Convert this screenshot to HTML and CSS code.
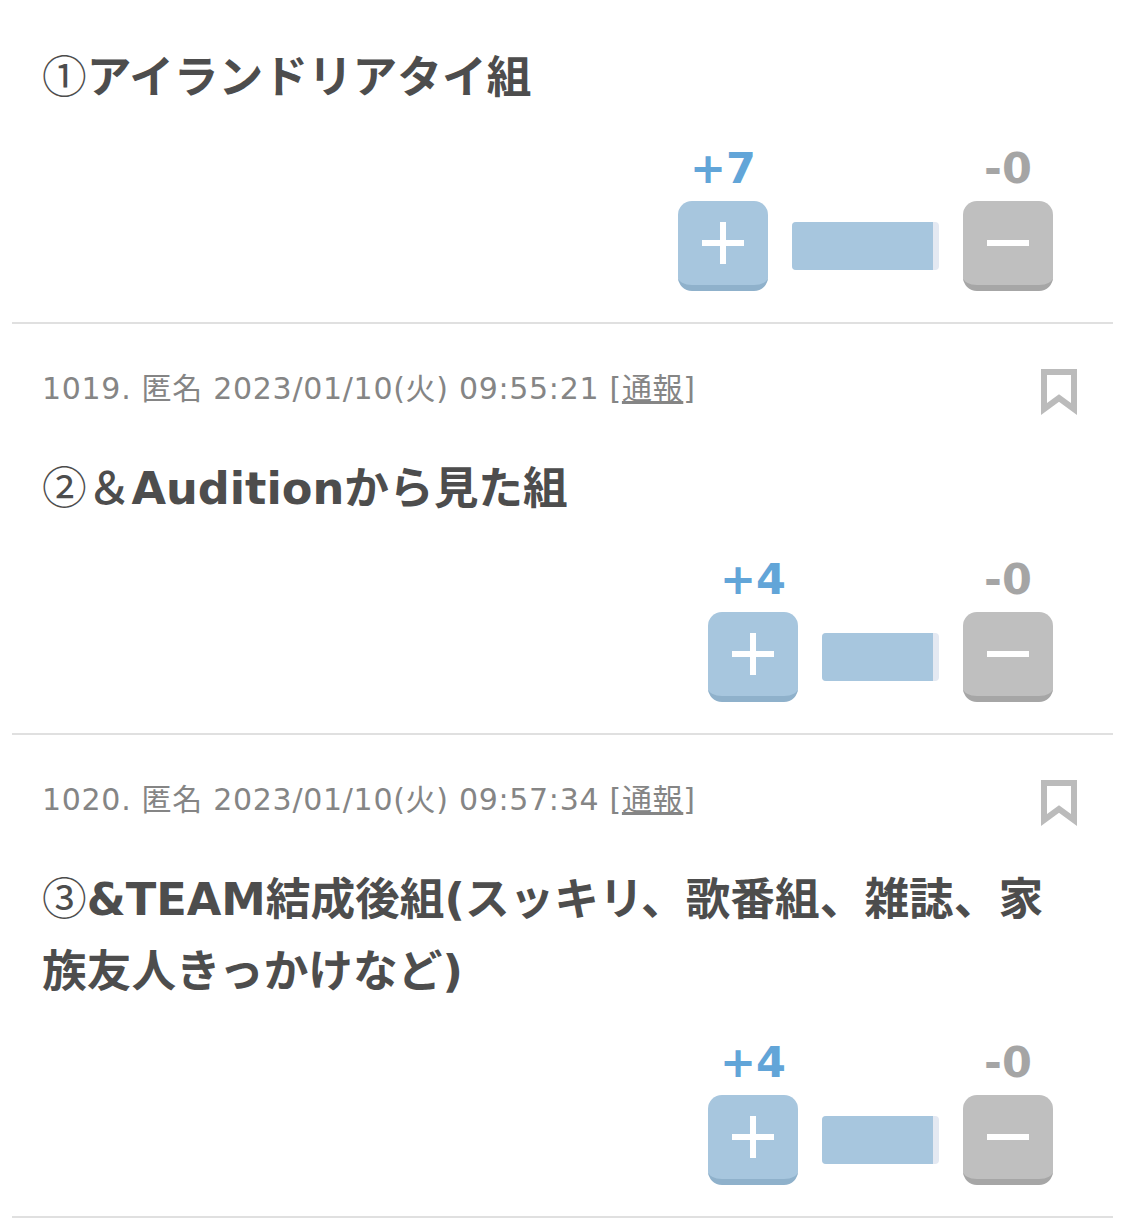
FILE: index.html
```html
<!DOCTYPE html>
<html>
	<head>
		<meta charset="utf-8">
		<link rel="stylesheet" href="styles.css">
		<title>コメント</title>
	</head>
	<body>
		<ul class="list">
			<li class="item first">
				<h3 class="title"><span class="num">①</span>アイランドリアタイ組</h3>
				<div class="vote">
					<div class="col">
						<span class="count plus">+7</span>
						<div class="btn btn-plus">
							<svg width="42" height="42" viewBox="0 0 42 42"><path d="M0 21H42M21 0V42" stroke="#fff" stroke-width="6"/></svg>
						</div>
					</div>
					<div class="bar" style="width:147px"><div class="fill"></div></div>
					<div class="col">
						<span class="count minus">-0</span>
						<div class="btn btn-minus">
							<svg width="42" height="42" viewBox="0 0 42 42"><path d="M0 21H42" stroke="#fff" stroke-width="6"/></svg>
						</div>
					</div>
				</div>
			</li>
			<li class="item">
				<div class="meta">
					<p class="info">1019. 匿名 2023/01/10(火) 09:55:21 [<a href="#">通報</a>]</p>
					<svg class="mark" width="36" height="46" viewBox="0 0 36 46"><path d="M3 3H33V40L18 29L3 40Z" fill="none" stroke="#bbb" stroke-width="6"/></svg>
				</div>
				<h3 class="title"><span class="num">②</span><span class="num amp">＆</span>Auditionから見た組</h3>
				<div class="vote">
					<div class="col">
						<span class="count plus">+4</span>
						<div class="btn btn-plus">
							<svg width="42" height="42" viewBox="0 0 42 42"><path d="M0 21H42M21 0V42" stroke="#fff" stroke-width="6"/></svg>
						</div>
					</div>
					<div class="bar" style="width:117px"><div class="fill"></div></div>
					<div class="col">
						<span class="count minus">-0</span>
						<div class="btn btn-minus">
							<svg width="42" height="42" viewBox="0 0 42 42"><path d="M0 21H42" stroke="#fff" stroke-width="6"/></svg>
						</div>
					</div>
				</div>
			</li>
			<li class="item">
				<div class="meta">
					<p class="info">1020. 匿名 2023/01/10(火) 09:57:34 [<a href="#">通報</a>]</p>
					<svg class="mark" width="36" height="46" viewBox="0 0 36 46"><path d="M3 3H33V40L18 29L3 40Z" fill="none" stroke="#bbb" stroke-width="6"/></svg>
				</div>
				<h3 class="title"><span class="num">③</span>&amp;TEAM結成後組(スッキリ、歌番組、雑誌、家族友人きっかけなど)</h3>
				<div class="vote">
					<div class="col">
						<span class="count plus">+4</span>
						<div class="btn btn-plus">
							<svg width="42" height="42" viewBox="0 0 42 42"><path d="M0 21H42M21 0V42" stroke="#fff" stroke-width="6"/></svg>
						</div>
					</div>
					<div class="bar" style="width:117px"><div class="fill"></div></div>
					<div class="col">
						<span class="count minus">-0</span>
						<div class="btn btn-minus">
							<svg width="42" height="42" viewBox="0 0 42 42"><path d="M0 21H42" stroke="#fff" stroke-width="6"/></svg>
						</div>
					</div>
				</div>
			</li>
		</ul>
	</body>
</html>
```

FILE: styles.css
```css
*{
	margin: 0;
	padding: 0;
	box-sizing: border-box;
}
body{
	background: #fff;
	color: #4d4d4d;
	font-family: "DejaVu Sans", "Noto Sans CJK JP", sans-serif;
}
li{
	list-style: none;
}
.list{
	margin: 0 12px;
}
.item{
	padding: 45px 0 31px;
	border-bottom: 2px solid #e0e0e0;
}
.item.first{
	padding-top: 40px;
}
.meta{
	display: flex;
	justify-content: space-between;
	padding: 0 36px 0 30px;
	margin-bottom: 36px;
	height: 46px;
}
.info{
	font-size: 30px;
	letter-spacing: 0.7px;
	line-height: 40px;
	color: #858585;
}
.info a{
	color: #858585;
}
.mark{
	flex: none;
}
.title{
	padding: 2px 60px 0 30px;
	font-size: 44.7px;
	line-height: 72px;
	font-weight: bold;
}
.num{
	font-family: "Noto Sans CJK JP", sans-serif;
	font-weight: normal;
	line-height: 0;
}
.amp{
	font-weight: 500;
}
.vote{
	display: flex;
	justify-content: flex-end;
	align-items: flex-end;
	padding-right: 60px;
	margin-top: 32px;
}
.col{
	width: 90px;
	display: flex;
	flex-direction: column;
	align-items: center;
}
.count{
	font-size: 43px;
	line-height: 44px;
	font-weight: bold;
	margin-bottom: 11px;
}
.plus{
	color: #62a5d8;
}
.minus{
	color: #a5a5a5;
}
.btn{
	width: 90px;
	height: 90px;
	border-radius: 14px;
	display: flex;
	align-items: center;
	justify-content: center;
}
.btn-plus{
	background: #a7c6de;
	border-bottom: 6px solid #8fb1cb;
}
.btn-minus{
	background: #bfbfbf;
	border-bottom: 6px solid #a6a6a6;
}
.bar{
	height: 48px;
	margin: 0 24px 21px 24px;
	background: #e4e9f2;
	border-radius: 4px;
	padding-right: 6px;
}
.fill{
	height: 100%;
	background: #a7c6de;
	border-radius: 4px 0 0 4px;
}
```
